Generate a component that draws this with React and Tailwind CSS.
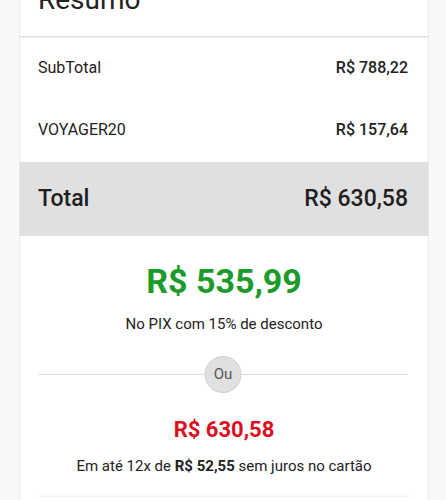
export default function App() {
  return (
    <div className="min-h-[500px] w-[446px] overflow-hidden bg-[#f8f8f8]" style={{ fontFamily: 'Roboto, "Noto Sans", sans-serif' }}>
      <div className="ml-[19px] w-[410px] border-x border-[#ececec] bg-white">
        <div className="border-b border-[#dcdcdc] px-[18px] pb-[20px]">
          <div className="mt-[-16px] text-[28px] leading-[32px] text-[#222]">Resumo</div>
        </div>
        <div className="h-px bg-[#f4f4f4]"></div>
        <div className="flex h-[62px] items-center justify-between pb-[2px] pl-[18px] pr-[20px] text-[16px] text-[#222]">
          <span>SubTotal</span>
          <span className="font-medium">R$ 788,22</span>
        </div>
        <div className="flex h-[62px] items-center justify-between pb-[2px] pl-[18px] pr-[20px] text-[16px] text-[#222]">
          <span>VOYAGER20</span>
          <span className="font-medium">R$ 157,64</span>
        </div>
        <div className="flex h-[74px] items-center justify-between bg-[#e0e0e0] pl-[18px] pr-[20px] text-[23px] font-medium text-[#1f1f1f]">
          <span>Total</span>
          <span>R$ 630,58</span>
        </div>
        <div className="flex flex-col items-center pt-[25px]">
          <div className="text-[34px] font-bold leading-[40px] text-[#1c9b2b]">R$ 535,99</div>
          <div className="mt-[14px] text-[15px] leading-[18px] text-[#222]">No PIX com 15% de desconto</div>
        </div>
        <div className="relative ml-[18px] mr-[20px] mt-[23px] flex h-[36px] items-center">
          <div className="h-px w-full bg-[#dedede]"></div>
          <div className="absolute left-1/2 top-0 flex h-[37px] w-[37px] -translate-x-1/2 items-center justify-center rounded-full border border-[#cfcfcf] bg-[#e0e0e0] text-[15px] text-[#555]">Ou</div>
        </div>
        <div className="flex flex-col items-center pt-[25px]">
          <div className="text-[22px] font-bold leading-[26px] text-[#dc0f1f]">R$ 630,58</div>
          <div className="mt-[14px] text-[15px] leading-[18px] text-[#222]">
            Em até 12x de <span className="font-bold">R$ 52,55</span> sem juros no cartão
          </div>
        </div>
        <div className="mx-[20px] mt-[21px] h-[20px] border-t border-[#f0f0f0] bg-white shadow-[0_-1px_2px_rgba(0,0,0,0.04)]"></div>
      </div>
    </div>
  );
}
